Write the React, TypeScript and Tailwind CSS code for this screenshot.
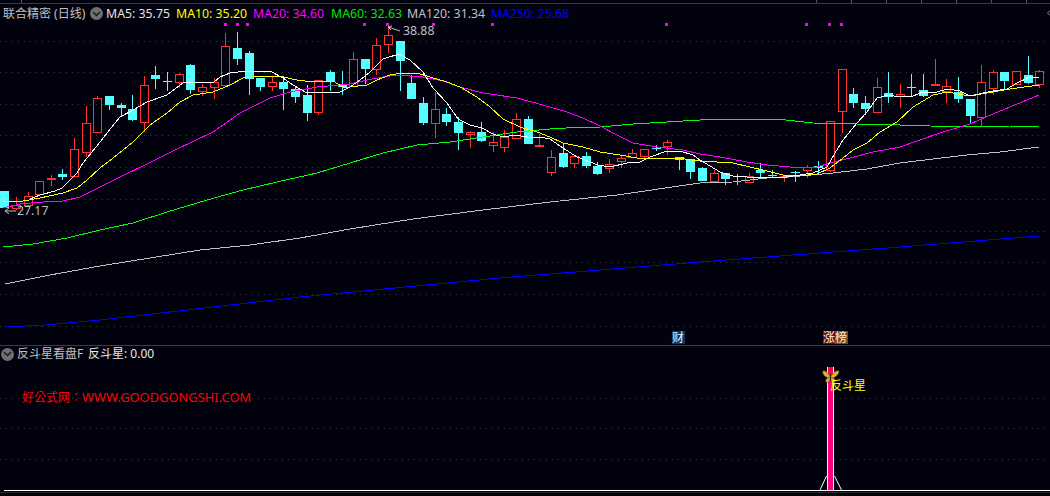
import React from "react";

type C = [number, number, number, number, number];
// [index, wickTop, bodyTop, bodyBottom, wickBottom]; red hollow / cyan filled
const red: C[] = [
  [1,197,205,209,210],[2,192,196,206,207],[3,181,181,195,195],[4,175,178,180,186],[6,138,149,177,177],[7,106,123,153,157],[8,96,98,133,133],
  [12,76,85,123,132],[15,73,74,83,88],[17,84,87,92,96],[18,78,82,88,99],[19,33,46,86,86],[23,76,82,87,91],[27,80,80,113,115],[30,52,59,87,87],
  [32,38,45,70,75],[33,27,35,45,53],[37,92,109,124,138],[40,131,132,135,148],[42,132,142,146,152],[43,130,137,148,152],[44,113,119,139,139],
  [46,134,145,147,147],[47,150,157,173,176],[49,156,156,164,168],[52,159,164,169,173],[53,156,158,162,168],[54,149,153,158,158],[55,149,149,157,159],
  [57,140,142,147,155],[61,170,173,182,182],[64,173,176,183,183],[67,176,176,177,182],[69,165,167,171,178],[71,121,121,171,172],[72,69,69,112,133],
  [75,78,87,113,113],[77,84,94,97,108],[80,59,84,86,86],[81,79,86,92,103],[84,65,82,118,127],[85,70,72,89,95],[87,71,71,85,85],[89,70,71,85,88],
];
const cyan: C[] = [
  [0,191,191,208,208],[5,169,174,177,180],[9,96,96,105,110],[10,103,105,108,116],[11,95,109,120,121],[13,66,75,79,89],[14,72,81,82,91],[16,64,65,90,94],
  [20,32,48,59,65],[21,51,53,79,95],[22,78,78,87,91],[24,76,82,89,110],[25,87,89,97,103],[26,85,95,113,121],[28,70,72,82,91],[29,71,85,87,95],
  [31,59,59,69,84],[34,41,41,61,91],[35,75,83,99,99],[36,97,103,123,125],[38,108,114,122,126],[39,117,122,133,150],[41,122,132,141,142],[45,116,119,144,144],
  [48,143,153,167,168],[50,152,156,166,168],[51,162,166,174,175],[56,145,148,149,151],[58,157,157,160,170],[59,159,159,172,179],[60,167,168,181,181],
  [62,173,173,179,185],[63,174,176,177,185],[65,163,170,173,178],[66,170,175,176,178],[68,171,172,173,182],[70,161,166,168,174],[73,88,94,103,108],
  [74,96,103,109,115],[76,72,93,97,103],[78,74,87,88,96],[79,74,90,96,97],[82,77,92,99,103],[83,99,99,116,123],[86,72,72,81,90],[88,56,75,83,84],
];
const cx = (i: number) => Math.round(4.3 + 11.63 * i);

const ma5 = "30,199 40,195 55,191 62,188 77,173 83,163 100,142 115,123 120,117 133,110 147,102 167,95 183,83 193,82 213,83 220,77 230,73 247,71 270,71 283,78 293,85 307,93 317,92 340,92 350,87 360,80 370,72 383,59 399,54 410,60 423,72 433,88 447,103 458,119 470,125 482,128 493,134 503,137 515,135 527,137 540,137 550,139 563,148 577,157 598,165 610,167 627,163 640,162 650,157 667,151 680,151 693,155 700,160 720,172 733,176 760,178 787,177 800,175 813,173 827,167 835,153 843,140 857,123 867,112 877,98 888,95 900,97 913,96 923,92 937,92 947,89 960,91 970,96 983,93 993,91 1007,89 1017,83 1028,78 1039,77";
const ma10 = "3,202 23,201 40,198 63,193 77,188 87,180 100,168 113,158 133,142 150,125 167,113 180,102 193,95 213,92 230,85 243,78 260,76 283,77 297,80 313,82 333,81 343,87 350,87 367,85 377,80 390,75 403,73 417,73 430,77 447,82 460,87 477,97 490,107 503,119 520,127 537,132 550,137 563,143 583,147 600,152 620,155 637,158 653,159 677,158 700,161 717,162 733,163 750,167 767,171 783,175 800,176 817,174 830,168 843,158 853,150 867,143 880,132 897,122 913,107 933,95 947,92 970,96 987,93 1010,89 1039,85";
const ma20 = "3,208 20,204 43,202 63,201 80,197 100,187 120,177 147,164 173,151 213,132 240,113 270,98 290,92 317,87 350,84 367,80 383,77 397,75 423,77 443,81 460,87 483,93 517,98 543,105 567,112 583,118 600,126 617,135 633,143 657,147 683,150 700,154 720,157 747,162 767,165 790,167 817,167 830,163 850,158 873,152 900,147 920,140 943,132 970,124 993,114 1027,100 1039,95";
const ma60 = "3,247 33,244 67,238 100,230 133,223 167,212 207,200 243,190 277,182 317,173 350,163 383,153 417,145 450,142 483,137 517,132 550,129 583,127 600,127 633,124 667,122 700,120 708,119 777,119 813,123 900,125 930,126 967,127 1010,126 1039,126";
const ma120 = "5,284 50,275 100,266 150,258 200,250 250,245 300,238 350,229 413,219 483,210 550,202 617,195 700,183 733,182 767,178 800,176 833,173 867,169 900,163 933,159 967,155 1000,152 1039,147";
const ma250 = "5,327 45,325 100,320 300,297 500,278 700,262 900,247 1039,236";

const dots = [225, 237, 247, 364, 387, 433, 492, 666, 806, 829, 841];
const grid = [41, 72, 104, 135, 167, 199, 231, 262, 294, 326];
const grid2 = [53, 83, 114]; // relative to lower pane
const ticks = [21, 816, 851, 886, 921, 956, 991, 1026];

const maLegend = [
  ["MA5: 35.75", "text-[#e4e4e4]", "w-[70px]"],
  ["MA10: 35.20", "text-[#ffff00]", "w-[77px]"],
  ["MA20: 34.60", "text-[#ff00ff]", "w-[78px]"],
  ["MA60: 32.63", "text-[#00e600]", "w-[76px]"],
  ["MA120: 31.34", "text-[#c0c0c0]", "w-[84px]"],
  ["MA250: 25.68", "text-[#0000ff]", "w-[84px]"],
];

const font = { fontFamily: '"Noto Sans", "Noto Sans CJK SC", sans-serif' };

function Toggle() {
  return (
    <span className="flex h-[13px] w-[13px] shrink-0 items-center justify-center rounded-full bg-[#707070]">
      <svg width="9" height="6" viewBox="0 0 9 6" fill="none" stroke="#1c1c1c" strokeWidth="1.5">
        <path d="M1 1 L4.5 4.5 L8 1" />
      </svg>
    </span>
  );
}

export default function App() {
  return (
    <div className="flex h-[496px] w-[1050px] flex-col overflow-hidden bg-[#02020e] text-[12.3px] leading-[16px]" style={font}>
      <div className="relative h-[346px] shrink-0 border-b border-[#3c3c3c]">
        <svg className="absolute left-0 top-0" width="1050" height="345" viewBox="0 0 1050 345" shapeRendering="crispEdges">
          <path d="M0 3.5H1050" stroke="#3a3a3a" />
          {ticks.map((x) => <path key={x} d={`M${x + 0.5} 0V3`} stroke="#5a5a5a" />)}
          {grid.map((y) => <path key={y} d={`M0 ${y + 0.5}H1050`} stroke="#3e3e3e" strokeDasharray="1 5" />)}
          {dots.map((x) => <rect key={x} x={x - 1} y={23} width={3} height={3} fill="#ff00ff" />)}
          {cyan.map(([i, wt, bt, bb, wb]) => {
            const x = cx(i);
            return (
              <g key={i} fill="#55ffff">
                <rect x={x} y={wt} width={1} height={wb - wt} />
                <rect x={x - 4} y={bt} width={9} height={Math.max(bb - bt, 1)} />
              </g>
            );
          })}
          {red.map(([i, wt, bt, bb, wb]) => {
            const x = cx(i);
            return (
              <g key={i}>
                {wt < bt && <rect x={x} y={wt} width={1} height={bt - wt} fill="#ff3232" />}
                {wb > bb && <rect x={x} y={bb} width={1} height={wb - bb} fill="#ff3232" />}
                <rect x={x - 3.5} y={bt + 0.5} width={8} height={Math.max(bb - bt - 1, 1)} fill="none" stroke="#ff3232" />
              </g>
            );
          })}
          <g fill="none" strokeWidth="1" strokeLinejoin="round">
            <polyline points={ma250} stroke="#0000ff" />
            <polyline points={ma120} stroke="#c0c0c0" />
            <polyline points={ma60} stroke="#00ff00" />
            <polyline points={ma20} stroke="#ff00ff" />
            <polyline points={ma10} stroke="#ffff00" />
            <polyline points={ma5} stroke="#ffffff" />
          </g>
          <g fill="none" strokeWidth="1" shapeRendering="geometricPrecision">
            <path d="M400 31 L388 27 M388 27 L392 26 M388 27 L391 30" stroke="#c0c0c0" />
            <path d="M16 211 L5 211 M5 211 L9 208 M5 211 L9 214" stroke="#c0c0c0" />
            <path d="M1050 10.5 L1047.5 13 L1050 15.5" stroke="#888" />
          </g>
        </svg>
        <div className="relative flex h-[27px] items-center pl-[3px]">
          <span className="w-[87px] shrink-0 whitespace-nowrap text-[12px] text-[#c0c0c0]">联合精密 (日线)</span>
          <Toggle />
          <span className="w-[3px]" />
          {maLegend.map(([t, c, w]) => (
            <span key={t} className={`${c} ${w} shrink-0 whitespace-nowrap`}>{t}</span>
          ))}
        </div>
        <span className="absolute left-[403px] top-[23px] text-[#c0c0c0]">38.88</span>
        <span className="absolute left-[17px] top-[203px] text-[#c0c0c0]">27.17</span>
        <span className="absolute left-[672px] top-[331px] h-[13px] w-[13px] bg-[#003a70] text-[12px] leading-[13px] text-[#f0f0f0]">财</span>
        <span className="absolute left-[823px] top-[331px] h-[13px] w-[12px] bg-[#7a0606] text-[12px] leading-[13px] text-[#f0f0f0]">涨</span>
        <span className="absolute left-[835px] top-[331px] h-[13px] w-[13px] bg-[#85480f] text-[12px] leading-[13px] text-[#f0f0f0]">榜</span>
      </div>
      <div className="relative flex-1">
        <svg className="absolute left-0 top-0" width="1050" height="150" viewBox="0 346 1050 150" shapeRendering="crispEdges">
          {grid2.map((y) => <path key={y} d={`M0 ${y + 345.5}H1050`} stroke="#3e3e3e" strokeDasharray="1 5" />)}
          <path d="M4 490.5H1050" stroke="#ffffff" />
          <path d="M0 492.5H1050" stroke="#2a2a2a" />
          <rect x="827" y="367" width="7" height="123" fill="#ffff66" />
          <rect x="828" y="367" width="5" height="123" fill="#ff0080" />
          <rect x="833" y="367" width="1" height="123" fill="#ffffff" />
          <g fill="none" stroke="#ffffff" shapeRendering="geometricPrecision">
            <path d="M820 490 L826.5 476" />
            <path d="M834.5 476 L841.5 490" />
          </g>
          <rect x="828" y="367" width="5" height="5" fill="#ff0030" />
          <g shapeRendering="geometricPrecision" fill="#e0b030" stroke="#7a5a10" strokeWidth="0.7">
            <path d="M830.5 377 C828 373 825 370 823 371 C822 374 825 378 830.5 378 Z" />
            <path d="M830.5 377 C833 373 836 370 839 371 C839 374 836 378 830.5 378 Z" />
            <path d="M830.5 378 C827 378 825 379 826 382 C828 383 830.5 381 830.5 378 Z" />
            <path d="M830.5 378 C834 378 836 379 835 382 C833 383 830.5 381 830.5 378 Z" />
            <path d="M830.5 373 V381" stroke="#3a2500" fill="none" strokeWidth="1" />
          </g>
        </svg>
        <div className="relative flex h-[16px] items-center">
          <span className="ml-[1px]"><Toggle /></span>
          <span className="ml-[3px] w-[71px] shrink-0 whitespace-nowrap text-[12px] text-[#c0c0c0]">反斗星看盘F</span>
          <span className="whitespace-nowrap text-[12px] text-[#e8e8e8]">反斗星: 0.00</span>
        </div>
        <div className="relative mt-[27px] whitespace-nowrap pl-[22px] text-[#ff0000]">
          <span className="text-[12px]" style={{ fontFamily: '"Noto Sans CJK TC", sans-serif' }}>好公式网：</span>
          <span className="text-[12.9px]">WWW.GOODGONGSHI.COM</span>
        </div>
        <span className="absolute left-[830px] top-[32px] whitespace-nowrap text-[12px] text-[#ffff00]">反斗星</span>
      </div>
    </div>
  );
}
